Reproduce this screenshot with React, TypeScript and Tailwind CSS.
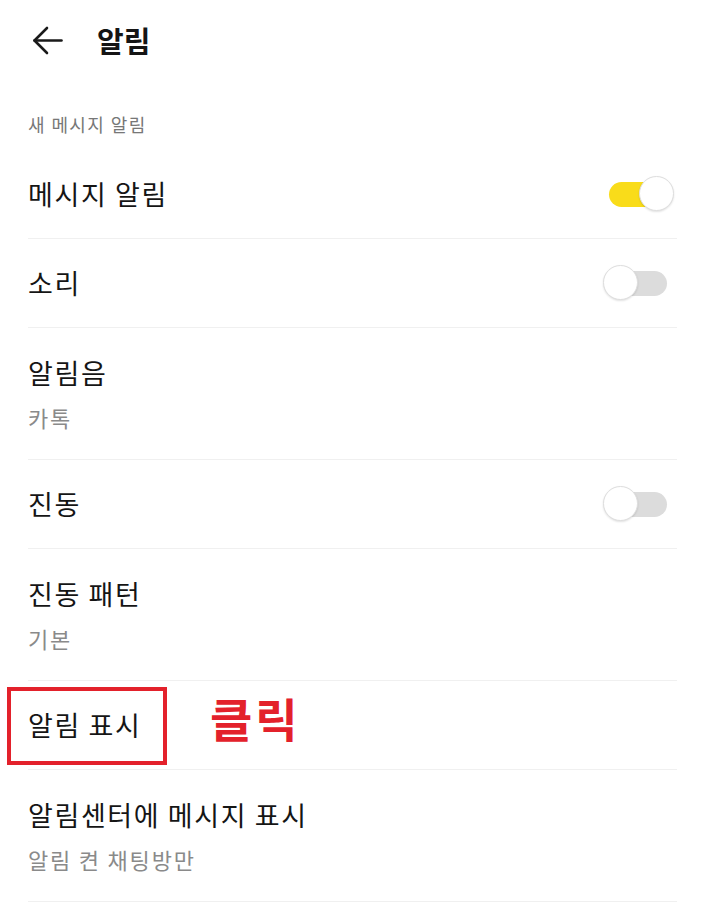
import React from "react";

const FONT = { fontFamily: '"Noto Sans CJK KR", "Noto Sans", sans-serif' };

function Toggle({ on }: { on: boolean }) {
    return (
        <div className="relative w-[71px] h-[36px] flex items-center">
            <div
                className={
                    "ml-[6px] w-[58px] h-[25px] rounded-full " +
                    (on ? "bg-[#f9dc1a]" : "bg-[#dcdcdc]")
                }
            />
            <div
                className={
                    "absolute top-0 w-[35px] h-[35px] rounded-full bg-white border border-[#dedede] shadow-[0_1px_2px_rgba(0,0,0,0.12)] " +
                    (on ? "left-[36px]" : "left-0")
                }
            />
        </div>
    );
}

function Row({
    title,
    sub,
    toggle,
    children,
}: {
    title: string;
    sub?: string;
    toggle?: boolean;
    children?: React.ReactNode;
}) {
    return (
        <div
            className={
                "relative ml-[28px] mr-[25px] flex items-center justify-between border-b border-[#f0f0f0] " +
                (sub ? "h-[132px]" : "h-[89px]")
            }
        >
            <div className="flex flex-col">
                <span className="text-[27px] leading-[36px] tracking-[1.6px] text-[#151515]">{title}</span>
                {sub && (
                    <span className="mt-[10px] text-[22px] leading-[32px] tracking-[1.8px] text-[#8a8a8a]">{sub}</span>
                )}
            </div>
            {toggle !== undefined && (
                <div className="mr-[3px]">
                    <Toggle on={toggle} />
                </div>
            )}
            {children}
        </div>
    );
}

export default function App() {
    return (
        <div className="w-[702px] h-[913px] bg-white overflow-hidden" style={FONT}>
            {/* Header */}
            <div className="h-20 flex items-center">
                <button className="ml-[31px] w-[33px] h-[33px] flex items-center justify-center">
                    <svg width="31" height="29" viewBox="0 0 31 29" fill="none" stroke="#1a1a1a" strokeWidth="2.6" strokeLinecap="round" strokeLinejoin="round">
                        <path d="M15 2 L2.5 14.5 L15 27" />
                        <path d="M2.5 14.5 H29.5" />
                    </svg>
                </button>
                <h1 className="ml-[33px] text-[29px] font-bold text-[#151515] leading-none">알림</h1>
            </div>

            {/* Section label */}
            <div className="h-[70px] pt-[33px] pl-[28px]">
                <span className="text-[18px] leading-[22px] tracking-[1.4px] text-[#777777]">새 메시지 알림</span>
            </div>

            <Row title="메시지 알림" toggle={true} />
            <Row title="소리" toggle={false} />
            <Row title="알림음" sub="카톡" />
            <Row title="진동" toggle={false} />
            <Row title="진동 패턴" sub="기본" />
            <Row title="알림 표시">
                {/* annotation overlay */}
                <div className="absolute left-[-21px] top-[6px] w-[160px] h-[78px] border-4 border-[#e3212b]" />
                <span className="absolute left-[182px] top-[13px] text-[46px] font-bold leading-none tracking-[3px] text-[#e3212b]">
                    클릭
                </span>
            </Row>
            <Row title="알림센터에 메시지 표시" sub="알림 켠 채팅방만" />
        </div>
    );
}
